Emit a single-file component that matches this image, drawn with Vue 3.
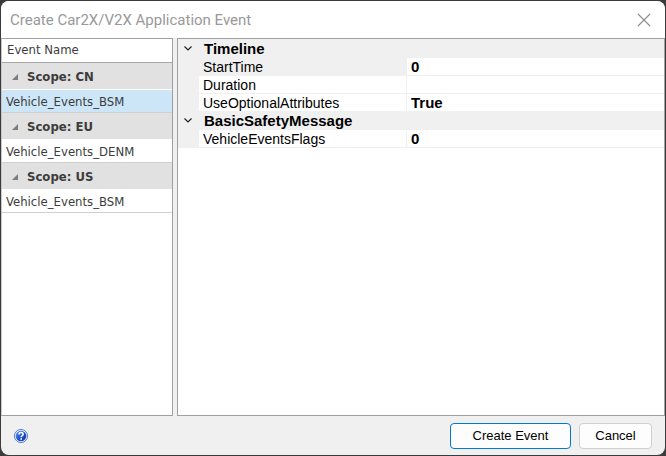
<script setup>
import { ref } from 'vue'

const scopes = [
  { name: 'Scope: CN', events: ['Vehicle_Events_BSM'] },
  { name: 'Scope: EU', events: ['Vehicle_Events_DENM'] },
  { name: 'Scope: US', events: ['Vehicle_Events_BSM'] },
]

const categories = [
  {
    name: 'Timeline',
    properties: [
      { name: 'StartTime', value: '0' },
      { name: 'Duration', value: '' },
      { name: 'UseOptionalAttributes', value: 'True' },
    ],
  },
  {
    name: 'BasicSafetyMessage',
    properties: [{ name: 'VehicleEventsFlags', value: '0' }],
  },
]

const selectedScope = ref('Scope: CN')
const selectedProperty = ref('StartTime')
</script>

<template>
  <main class="dialog">
    <header class="title-bar">
      <h1 class="title">Create Car2X/V2X Application Event</h1>
      <button class="close" type="button" aria-label="Close">
        <svg width="14" height="14" viewBox="0 0 14 14">
          <path d="M1 1L13 13M13 1L1 13" fill="none" stroke="#8c8c8c" stroke-width="1.1" />
        </svg>
      </button>
    </header>

    <div class="panels">
      <section class="panel">
        <table class="events">
          <thead>
            <tr><th scope="col">Event Name</th></tr>
          </thead>
          <tbody v-for="scope in scopes" :key="scope.name">
            <tr class="scope">
              <th scope="rowgroup">
                <svg class="triangle" width="6" height="6" viewBox="0 0 6 6">
                  <path d="M6 0V6H0Z" fill="#7d7d7d" />
                </svg>
                <span>{{ scope.name }}</span>
              </th>
            </tr>
            <tr
              v-for="event in scope.events"
              :key="event"
              class="event"
              :class="{ selected: scope.name === selectedScope }"
              @click="selectedScope = scope.name"
            >
              <td>{{ event }}</td>
            </tr>
          </tbody>
        </table>
      </section>

      <section class="panel">
        <table class="properties">
          <colgroup>
            <col class="gutter-col" />
            <col class="name-col" />
            <col />
          </colgroup>
          <tbody v-for="category in categories" :key="category.name">
            <tr class="category">
              <td class="gutter">
                <svg width="8" height="5" viewBox="0 0 8 5">
                  <path d="M0.5 0.5L4 4L7.5 0.5" fill="none" stroke="#222" stroke-width="1.2" />
                </svg>
              </td>
              <th colspan="2" scope="rowgroup">{{ category.name }}</th>
            </tr>
            <tr
              v-for="property in category.properties"
              :key="property.name"
              class="property"
              :class="{ selected: property.name === selectedProperty }"
              @click="selectedProperty = property.name"
            >
              <td class="gutter"></td>
              <th scope="row">{{ property.name }}</th>
              <td class="value">{{ property.value }}</td>
            </tr>
          </tbody>
        </table>
      </section>
    </div>

    <footer class="footer">
      <button class="help" type="button" aria-label="Help">
        <svg width="14" height="14" viewBox="0 0 14 14">
          <defs>
            <linearGradient id="help-fill" x1="0" y1="0" x2="1" y2="1">
              <stop offset="0" stop-color="#6d9df0" />
              <stop offset="0.5" stop-color="#1f55d6" />
              <stop offset="1" stop-color="#1237a8" />
            </linearGradient>
          </defs>
          <circle cx="7" cy="7" r="6.5" fill="#fff" stroke="#4a74c4" />
          <circle cx="7" cy="7" r="5.3" fill="url(#help-fill)" />
          <path d="M5 5.4C5 3.9 6 3.4 7.1 3.4C8.3 3.4 9.2 4.1 9.2 5.2C9.2 6.6 7.2 6.7 7.2 8.3" fill="none" stroke="#fff" stroke-width="1.5" />
          <rect x="6.4" y="9.2" width="1.6" height="1.6" fill="#fff" />
        </svg>
      </button>
      <div class="actions">
        <button class="button primary" type="button">Create Event</button>
        <button class="button" type="button">Cancel</button>
      </div>
    </footer>
  </main>
</template>

<style>
body {
  background: #3b3b3b;
}

#app {
  display: flex;
  min-height: 100vh;
}
</style>

<style scoped>
.dialog {
  flex: 1;
  display: flex;
  flex-direction: column;
  margin: 1px;
  overflow: hidden;
  border-radius: 8px;
  background: #f0f0f0;
  font-family: "Liberation Sans", Arial, sans-serif;
  font-size: 14px;
  color: #000;
}

.title-bar {
  display: flex;
  align-items: center;
  justify-content: space-between;
  height: 37px;
  padding: 0 14px 0 9px;
  background: #fff;
}

.title {
  margin: 0;
  font-family: Roboto, "Open Sans", sans-serif;
  font-size: 15px;
  font-weight: 400;
  color: #999;
}

.close,
.help {
  display: flex;
  padding: 0;
  border: 0;
  background: none;
}

.panels {
  flex: 1;
  display: grid;
  grid-template-columns: 172px 1fr;
  gap: 4px;
}

.panel {
  border: 1px solid #a0a0a0;
  background: #fff;
}

.panel:first-child {
  border-left-color: #c8c8c8;
}

table {
  width: 100%;
  border-collapse: separate;
  border-spacing: 0;
  table-layout: fixed;
}

th,
td {
  padding: 0;
  font-weight: 400;
  text-align: left;
  white-space: nowrap;
}

.events {
  font-family: "DejaVu Sans Condensed", "DejaVu Sans", sans-serif;
  font-size: 13px;
  line-height: 15px;
  color: #3c3c3c;
}

.events thead th {
  height: 21px;
  padding: 0 0 2px 5px;
  border-bottom: 1px solid #a9a9a9;
}

.scope th {
  height: 26px;
  padding-left: 10px;
  background: #e1e1e1;
  font-weight: 700;
}

.triangle {
  margin-right: 9px;
  vertical-align: 1px;
}

.event td {
  height: 22px;
  padding-left: 4px;
  border-top: 1px solid #fff;
  border-bottom: 1px solid #d0d0d0;
}

.event.selected td {
  background: #cde6f7;
}

.properties {
  line-height: 16px;
  border-top: 1px solid #f0f0f0;
}

.gutter-col {
  width: 21px;
}

.name-col {
  width: 208px;
}

.gutter,
.category th,
.property.selected th {
  background: #f0f0f0;
}

.gutter {
  padding: 0 2px 2px 0;
  line-height: 0;
  text-align: center;
}

.category th {
  height: 18px;
  padding-left: 5px;
  font-size: 15px;
  font-weight: 700;
}

.property th,
.property .value {
  height: 16px;
  padding-top: 1px;
  border-bottom: 1px solid #f0f0f0;
}

.property th {
  padding-left: 4px;
  border-right: 1px solid #f0f0f0;
}

.property .value {
  padding-left: 4px;
  font-size: 15px;
  font-weight: 700;
}

.footer {
  display: flex;
  align-items: center;
  justify-content: space-between;
  height: 39px;
  padding: 0 13px;
}

.actions {
  display: flex;
  gap: 8px;
}

.button {
  min-width: 73px;
  height: 26px;
  padding: 0 14px;
  border: 1px solid #d0d0d0;
  border-radius: 4px;
  background: #fdfdfd;
  font-family: inherit;
  font-size: 13px;
  color: #000;
}

.primary {
  min-width: 121px;
  border-color: #0078d4;
}
</style>
